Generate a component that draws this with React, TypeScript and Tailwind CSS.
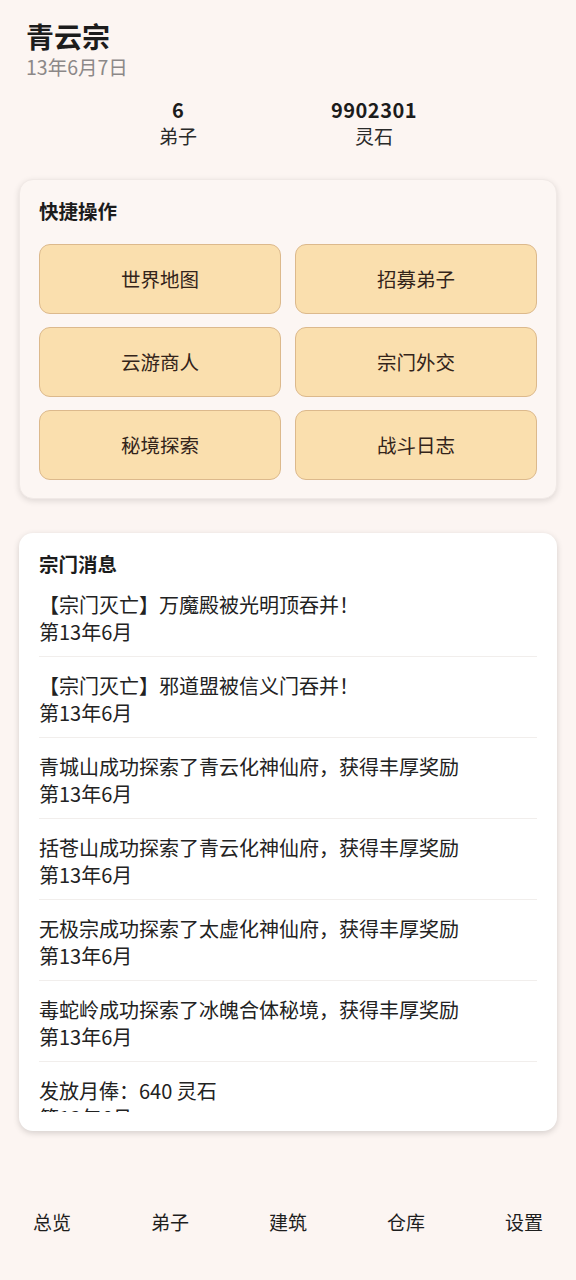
import React from "react";

const actions = ["世界地图", "招募弟子", "云游商人", "宗门外交", "秘境探索", "战斗日志"];

const messages = [
  "【宗门灭亡】万魔殿被光明顶吞并！",
  "【宗门灭亡】邪道盟被信义门吞并！",
  "青城山成功探索了青云化神仙府，获得丰厚奖励",
  "括苍山成功探索了青云化神仙府，获得丰厚奖励",
  "无极宗成功探索了太虚化神仙府，获得丰厚奖励",
  "毒蛇岭成功探索了冰魄合体秘境，获得丰厚奖励",
  "发放月俸：640 灵石",
];

const tabs = ["总览", "弟子", "建筑", "仓库", "设置"];

const App: React.FC = () => {
  return (
    <div
      className="min-h-[1280px] w-[576px] bg-[#fcf5f2] text-[#1c1c1c] flex flex-col"
      style={{ fontFamily: '"Noto Sans CJK SC", "Noto Sans", sans-serif' }}
    >
      {/* header */}
      <header className="pt-[20px] px-[26px]">
        <h1 className="text-[28px] leading-[32px] font-bold">青云宗</h1>
        <p className="mt-[2px] text-[19.5px] leading-[26px] text-[#8c8888]">13年6月7日</p>
      </header>

      <section className="ml-[80px] w-[392px] flex mt-[17px]">
        <div className="flex-1 flex flex-col items-center">
          <span className="text-[20px] leading-[26px] font-bold">6</span>
          <span className="text-[19px] leading-[26px] text-[#2a2a2a]">弟子</span>
        </div>
        <div className="flex-1 flex flex-col items-center">
          <span className="text-[20px] leading-[26px] font-bold tracking-[0.5px]">9902301</span>
          <span className="text-[19px] leading-[26px] text-[#2a2a2a]">灵石</span>
        </div>
      </section>

      <main className="px-[19px] mt-[30px] flex flex-col gap-[34px]">
        <section className="bg-[#fcf6f3] rounded-[14px] border border-[#f0e9e6] shadow-[0_2px_6px_rgba(0,0,0,0.12)] pt-[19px] pb-[18px] px-[19px]">
          <h2 className="text-[19.5px] leading-[24px] font-bold mb-[21px]">快捷操作</h2>
          <div className="grid grid-cols-2 gap-x-[14px] gap-y-[13px]">
            {actions.map((a) => (
              <button
                key={a}
                className="h-[70px] rounded-[11px] bg-[#fadfae] border-[1.5px] border-[#dcb98c] text-[19.5px] text-[#33241a] flex items-center justify-center"
              >
                {a}
              </button>
            ))}
          </div>
        </section>

        <section className="bg-white rounded-[14px] shadow-[0_2px_6px_rgba(0,0,0,0.16)] pt-[19px] pb-[19px] px-[20px]">
          <h2 className="text-[19.5px] leading-[24px] font-bold">宗门消息</h2>
          <ul className="h-[536px] overflow-hidden">
            {messages.map((m, i) => (
              <li
                key={i}
                className="pt-[15px] pb-[11px] border-b border-[#f1eeec] text-[20px] leading-[27px] text-[#222]"
              >
                <div>{m}</div>
                <div>第13年6月</div>
              </li>
            ))}
          </ul>
        </section>
      </main>

      <nav className="mt-auto px-[33px] pb-[45px] flex justify-between">
        {tabs.map((t) => (
          <span key={t} className="text-[19px] leading-[26px] text-[#1e1e1e]">
            {t}
          </span>
        ))}
      </nav>
    </div>
  );
};

export default App;
